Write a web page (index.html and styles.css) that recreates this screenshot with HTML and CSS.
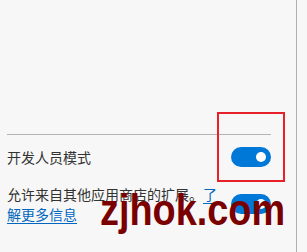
FILE: index.html
```html
<!DOCTYPE html>
<html lang="zh-CN">
<head>
<meta charset="utf-8">
<link rel="stylesheet" href="styles.css">
</head>
<body>
<div class="page">
  <main class="panel">
    <div class="divider"></div>
    <div class="row row-dev">
      <span class="label">开发人员模式</span>
      <span class="toggle"><span class="knob"></span></span>
    </div>
    <div class="row row-store">
      <span class="label wrap">允许来自其他应用商店的扩展。<a class="link" href="#">了解更多信息</a></span>
      <span class="toggle"><span class="knob"></span></span>
    </div>
  </main>
  <div class="scrollbar"></div>
  <div class="highlight"></div>
  <div class="watermark">zjhok.com</div>
</div>
</body>
</html>
```

FILE: styles.css
```css
html, body {
  margin: 0;
  padding: 0;
  background: #f7f7f7;
}
.page {
  position: relative;
  width: 307px;
  height: 252px;
  overflow: hidden;
  display: flex;
  font-family: "Noto Sans CJK SC", "Noto Sans", sans-serif;
  color: #333333;
  font-size: 14px;
}
.panel {
  width: 264px;
  margin-left: 7px;
  padding-top: 134px;
}
.divider {
  height: 1px;
  background: #b4b4b4;
}
.row {
  display: flex;
  align-items: center;
  justify-content: space-between;
}
.row-dev {
  margin-top: 12px;
}
.row-store {
  margin-top: 17px;
}
.label {
  line-height: 20px;
}
.wrap {
  flex: 1;
  padding-right: 10px;
}
.link {
  color: #0067c0;
  text-decoration: underline;
  text-underline-offset: 3px;
}
.toggle {
  flex: none;
  width: 40px;
  height: 20px;
  border-radius: 10px;
  background: #0078d7;
  display: flex;
  align-items: center;
  justify-content: flex-end;
  padding-right: 5px;
  box-sizing: border-box;
}
.knob {
  width: 10px;
  height: 10px;
  border-radius: 50%;
  background: #ffffff;
}
.scrollbar {
  margin-left: 25px;
  width: 1px;
  height: 252px;
  background: #b0b0b0;
}
.highlight {
  position: absolute;
  left: 217px;
  top: 112px;
  width: 68px;
  height: 70px;
  box-sizing: border-box;
  border: 2px solid #e8202a;
}
.watermark {
  position: absolute;
  left: 100px;
  top: 188px;
  font-family: "Liberation Sans", Arial, sans-serif;
  font-weight: bold;
  font-size: 44px;
  line-height: 44px;
  color: #7a0000;
  transform-origin: left top;
  transform: scaleX(0.86);
}
```
